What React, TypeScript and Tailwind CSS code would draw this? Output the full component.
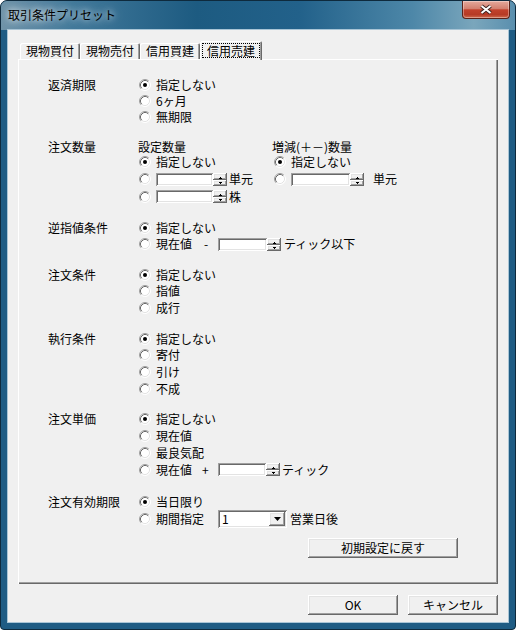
import * as React from "react";
import clsx from "clsx";

// Classic (non-themed) 3D edges, as drawn by the old common controls inside an Aero frame.
const raised =
  "bg-[#f0f0f0] shadow-[inset_-1px_-1px_#696969,inset_1px_1px_#ffffff,inset_-2px_-2px_#a0a0a0,inset_2px_2px_#e3e3e3]";
const sunken =
  "bg-white shadow-[inset_1px_1px_#a0a0a0,inset_-1px_-1px_#ffffff,inset_2px_2px_#696969,inset_-2px_-2px_#e3e3e3]";

function RadioMark({ on }: { on?: boolean }) {
  return (
    <svg width="12" height="12" viewBox="0 0 12 12" className="shrink-0" aria-hidden="true">
      <circle cx="6" cy="6" r="5" fill="#fff" />
      <path d="M2.11 9.89A5.5 5.5 0 0 1 9.89 2.11" fill="none" stroke="#a0a0a0" />
      <path d="M9.89 2.11A5.5 5.5 0 0 1 2.11 9.89" fill="none" stroke="#ffffff" />
      <path d="M2.82 9.18A4.5 4.5 0 0 1 9.18 2.82" fill="none" stroke="#696969" />
      <path d="M9.18 2.82A4.5 4.5 0 0 1 2.82 9.18" fill="none" stroke="#e3e3e3" />
      {on ? <circle cx="6" cy="6" r="2" fill="#000" /> : null}
    </svg>
  );
}

function Opt({
  on,
  h = "h-[17px]",
  className,
  children,
}: {
  on?: boolean;
  h?: string;
  className?: string;
  children?: React.ReactNode;
}) {
  return (
    <div className={clsx("flex items-center gap-[5px]", h, className)}>
      <RadioMark on={on} />
      {children}
    </div>
  );
}

function Tiny({ up }: { up?: boolean }) {
  return (
    <svg width="3" height="2" viewBox="0 0 3 2" aria-hidden="true">
      <path d={up ? "M1 0h1v1h1v1H0V1h1z" : "M0 0h3v1H2v1H1V1H0z"} fill="#000" />
    </svg>
  );
}

/** Edit box with an up/down spinner glued to its right side. */
function NumBox({ w }: { w: string }) {
  return (
    <div className="flex h-[13px] items-stretch">
      <div className={clsx(sunken, w)} />
      <div className="flex w-[14px] flex-col">
        <div className={clsx(raised, "flex h-[7px] items-end justify-center pb-[1px]")}>
          <Tiny up />
        </div>
        <div className={clsx(raised, "flex h-[6px] items-center justify-center")}>
          <Tiny />
        </div>
      </div>
    </div>
  );
}

function Section({
  label,
  lh = "h-4",
  className,
  children,
}: {
  label: string;
  lh?: string;
  className?: string;
  children: React.ReactNode;
}) {
  return (
    <div className={clsx("flex", className)}>
      <div className={clsx("flex w-[91px] shrink-0 items-center", lh)}>{label}</div>
      <div className="flex flex-col">{children}</div>
    </div>
  );
}

function Tab({ label, active }: { label: string; active?: boolean }) {
  return (
    <div
      className={clsx(
        "flex items-center justify-center rounded-t-[2px] bg-[#f0f0f0] shadow-[inset_1px_1px_#ffffff,inset_-1px_0_#696969,inset_-2px_0_#a0a0a0]",
        active ? "relative z-10 -mb-px h-[19px] w-[62px]" : "h-[16px] w-[60px]",
      )}
    >
      {active ? (
        <span className="flex h-[15px] w-[58px] items-center justify-center border border-dotted border-black">
          {label}
        </span>
      ) : (
        label
      )}
    </div>
  );
}

function PushButton({ children, w }: { children: React.ReactNode; w: string }) {
  return (
    <div className={clsx(raised, "flex h-[20px] items-center justify-center", w)}>{children}</div>
  );
}

export default function App() {
  return (
    <div className="relative h-[630px] w-[516px] overflow-hidden rounded-t-[7px] rounded-b-[4px] border border-[#0e2a3d] bg-[#1f5c84] font-['Noto_Sans_CJK_JP','Noto_Sans',sans-serif] text-[12px] leading-none text-black">
      {/* Aero title bar */}
      <div className="flex h-[29px] items-start justify-between bg-[linear-gradient(90deg,#6f93a8_0%,#41789a_14%,#1d5b81_38%,#22618a_58%,#4d87a8_80%,#7aa6bc_92%,#5a8fae_100%)]">
        <span className="ml-[7px] mt-[8px] [text-shadow:0_0_6px_rgba(255,255,255,0.9),0_0_12px_rgba(255,255,255,0.7)]">
          取引条件プリセット
        </span>
        <div className="mr-[5px] flex h-[18px] w-[48px] items-center justify-center rounded-b-[4px] border border-t-0 border-[#5b2219] bg-[linear-gradient(180deg,#e5a99c_0%,#d3806f_45%,#c2412c_52%,#b63a25_80%,#d06c4f_100%)] shadow-[inset_0_0_0_1px_rgba(255,255,255,0.35)]">
          <svg width="14" height="11" viewBox="0 0 14 11" aria-hidden="true">
            <path d="M2.5 2 L11.5 9 M11.5 2 L2.5 9" stroke="#3d2320" strokeWidth="4" />
            <path d="M2.5 2 L11.5 9 M11.5 2 L2.5 9" stroke="#ffffff" strokeWidth="2" />
          </svg>
        </div>
      </div>

      {/* client area */}
      <div className="ml-[7px] flex h-[592px] w-[500px] flex-col bg-[#f0f0f0] ring-1 ring-[#a9c5d6]">
        <div className="ml-[12px] mt-[11px] flex h-[18px] items-end">
          <Tab label="現物買付" />
          <Tab label="現物売付" />
          <Tab label="信用買建" />
          <Tab label="信用売建" active />
        </div>

        <div className="mx-[10px] flex h-[525px] flex-col pl-[30px] pt-[18px] shadow-[inset_1px_1px_#ffffff,inset_-1px_-1px_#696969,inset_-2px_-2px_#a0a0a0]">
          <Section label="返済期限">
            <Opt on h="h-4">指定しない</Opt>
            <Opt h="h-4">6ヶ月</Opt>
            <Opt h="h-4">無期限</Opt>
          </Section>

          <Section label="注文数量" lh="h-[15px]" className="mt-[14px]">
            <div className="flex">
              <div className="flex w-[133px] flex-col">
                <div className="-ml-px flex h-[15px] items-center">設定数量</div>
                <Opt on h="h-4">指定しない</Opt>
                <Opt h="h-[18px]">
                  <NumBox w="w-[57px]" />
                  <span className="-ml-[3px]">単元</span>
                </Opt>
                <Opt>
                  <NumBox w="w-[57px]" />
                  <span className="-ml-[3px]">株</span>
                </Opt>
              </div>
              <div className="flex flex-col">
                <div className="flex h-[15px] items-center">増減(＋－)数量</div>
                <Opt on h="h-4" className="ml-[2px]">
                  指定しない
                </Opt>
                <Opt h="h-[18px]" className="ml-[2px]">
                  <NumBox w="w-[59px]" />
                  <span className="ml-[4px]">単元</span>
                </Opt>
              </div>
            </div>
          </Section>

          <Section label="逆指値条件" className="mt-[15px]">
            <Opt on h="h-4">指定しない</Opt>
            <Opt h="h-4">
              <span className="w-[48px]">現在値</span>
              <span className="-ml-[5px] w-[9px]">-</span>
              <NumBox w="w-[49px]" />
              <span className="-ml-[2px]">ティック以下</span>
            </Opt>
          </Section>

          <Section label="注文条件" className="mt-[15px]">
            <Opt on h="h-4">指定しない</Opt>
            <Opt h="h-4">指値</Opt>
            <Opt>成行</Opt>
          </Section>

          <Section label="執行条件" lh="h-[17px]" className="mt-[14px]">
            <Opt on>指定しない</Opt>
            <Opt h="h-4">寄付</Opt>
            <Opt>引け</Opt>
            <Opt>不成</Opt>
          </Section>

          <Section label="注文単価" className="mt-[14px]">
            <Opt on h="h-4">指定しない</Opt>
            <Opt>現在値</Opt>
            <Opt>最良気配</Opt>
            <Opt>
              <span className="w-[46px]">現在値</span>
              <span className="-ml-[5px] w-[11px]">+</span>
              <NumBox w="w-[48px]" />
              <span className="-ml-[3px]">ティック</span>
            </Opt>
          </Section>

          <Section label="注文有効期限" lh="h-[17px]" className="mt-[15px]">
            <Opt on>当日限り</Opt>
            <Opt h="h-[18px]">
              <span className="w-[57px]">期間指定</span>
              <div className={clsx(sunken, "flex h-[18px] w-[69px] items-center p-[2px]")}>
                <span className="flex-1 pl-[2px]">1</span>
                <div className={clsx(raised, "flex h-[14px] w-[16px] items-center justify-center")}>
                  <svg width="7" height="4" viewBox="0 0 7 4" aria-hidden="true">
                    <path d="M0 0h7L3.5 4z" fill="#000" />
                  </svg>
                </div>
              </div>
              <span className="-ml-[2px]">営業日後</span>
            </Opt>
          </Section>

          <div className="ml-[260px] mt-[10px]">
            <PushButton w="w-[150px]">初期設定に戻す</PushButton>
          </div>
        </div>

        <div className="mr-[10px] mt-[11px] flex justify-end gap-[10px]">
          <PushButton w="w-[90px]">OK</PushButton>
          <PushButton w="w-[90px]">キャンセル</PushButton>
        </div>
      </div>
    </div>
  );
}
